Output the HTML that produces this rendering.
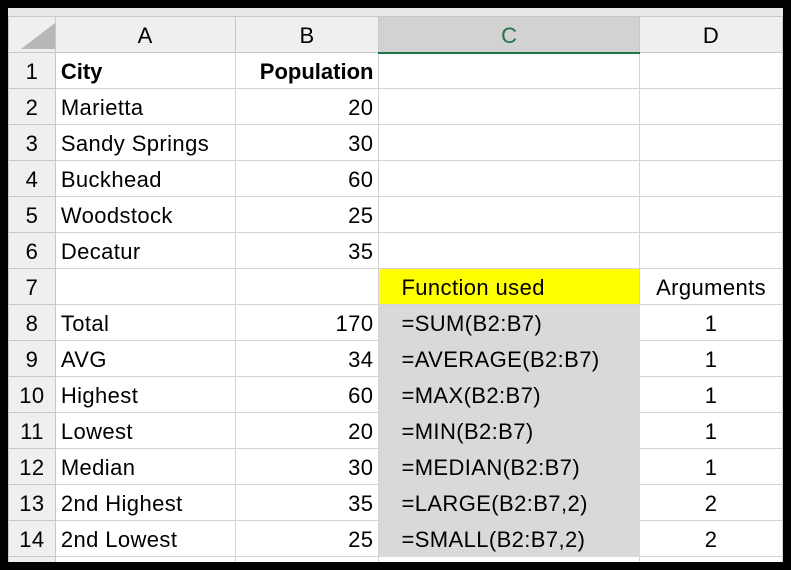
<!DOCTYPE html><html><head><style>
body{margin:0;background:#000;width:791px;height:570px;overflow:hidden;font-family:"Liberation Sans",sans-serif;}
#w{position:absolute;left:8px;top:8px;width:775px;height:554px;background:#fff;overflow:hidden}
.top{position:absolute;left:0;top:0;width:775px;height:8px;background:#e6e8ea}
table{position:absolute;left:0;top:8px;border-collapse:collapse;table-layout:fixed}
td{height:36px;border:1px solid #d4d4d4;padding:3px 5px 0 5px;box-sizing:border-box;font-size:22px;letter-spacing:0.4px;color:#000;white-space:nowrap;overflow:hidden}
tr.h td{background:#efefef;text-align:center;border-color:#c8c8c8}
td.rh{background:#efefef;text-align:center;padding:3px 0 0 0;border-color:#c8c8c8}
.r{text-align:right}.c{text-align:center}
.y{background:#ffff00;padding-left:22px}
.g{background:#d9d9d9;padding-left:22px;border-color:#d9d9d9}
b{letter-spacing:0}
</style></head><body><div id="w"><div class="top"></div>
<table>
<colgroup><col style="width:47px"><col style="width:180px"><col style="width:144px"><col style="width:261px"><col style="width:143px"></colgroup>
<tr class="h"><td style="position:relative"><svg width="34" height="26" style="position:absolute;left:12px;top:6px"><polygon points="34,0 34,26 0,26" fill="#b7b7b7"/></svg></td><td>A</td><td>B</td><td style="background:#d2d2d2;border-bottom:2px solid #217346;color:#217346">C</td><td>D</td></tr>
<tr><td class="rh">1</td><td><b>City</b></td><td class="r"><b>Population</b></td><td></td><td></td></tr>
<tr><td class="rh">2</td><td>Marietta</td><td class="r">20</td><td></td><td></td></tr>
<tr><td class="rh">3</td><td>Sandy Springs</td><td class="r">30</td><td></td><td></td></tr>
<tr><td class="rh">4</td><td>Buckhead</td><td class="r">60</td><td></td><td></td></tr>
<tr><td class="rh">5</td><td>Woodstock</td><td class="r">25</td><td></td><td></td></tr>
<tr><td class="rh">6</td><td>Decatur</td><td class="r">35</td><td></td><td></td></tr>
<tr><td class="rh">7</td><td></td><td></td><td class="y">Function used</td><td class="c">Arguments</td></tr>
<tr><td class="rh">8</td><td>Total</td><td class="r">170</td><td class="g">=SUM(B2:B7)</td><td class="c">1</td></tr>
<tr><td class="rh">9</td><td>AVG</td><td class="r">34</td><td class="g">=AVERAGE(B2:B7)</td><td class="c">1</td></tr>
<tr><td class="rh">10</td><td>Highest</td><td class="r">60</td><td class="g">=MAX(B2:B7)</td><td class="c">1</td></tr>
<tr><td class="rh">11</td><td>Lowest</td><td class="r">20</td><td class="g">=MIN(B2:B7)</td><td class="c">1</td></tr>
<tr><td class="rh">12</td><td>Median</td><td class="r">30</td><td class="g">=MEDIAN(B2:B7)</td><td class="c">1</td></tr>
<tr><td class="rh">13</td><td>2nd Highest</td><td class="r">35</td><td class="g">=LARGE(B2:B7,2)</td><td class="c">2</td></tr>
<tr><td class="rh">14</td><td>2nd Lowest</td><td class="r">25</td><td class="g">=SMALL(B2:B7,2)</td><td class="c">2</td></tr>
<tr><td class="rh"></td><td></td><td></td><td></td><td></td></tr>
</table></div></body></html>
